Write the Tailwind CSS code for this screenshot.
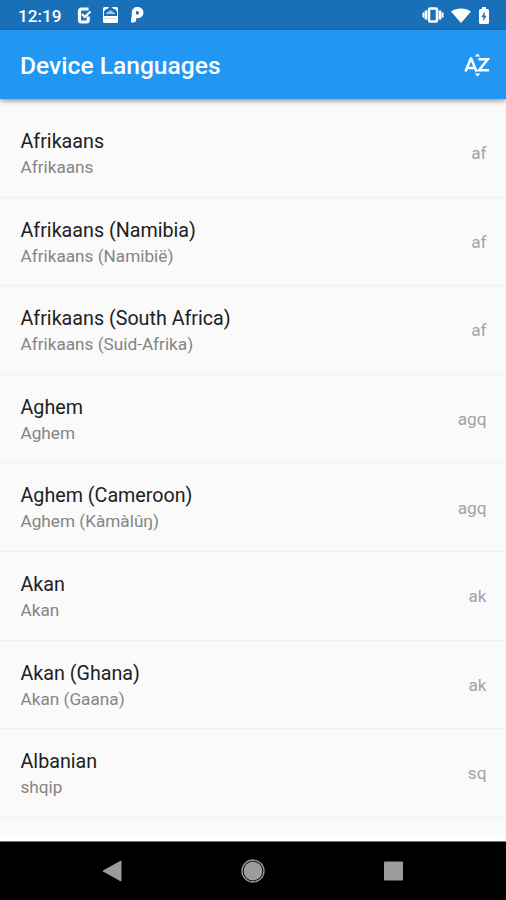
<!DOCTYPE html>
<html lang="en">
<head>
<meta charset="utf-8">
<title>Device Languages</title>
<script src="https://cdn.jsdelivr.net/npm/@tailwindcss/browser@4"></script>
</head>
<body class="w-[506px] h-[900px] overflow-hidden bg-[#fafafa] font-[Roboto,sans-serif] flex flex-col">
<div class="h-[30px] shrink-0 bg-[#1a70b8] text-white flex items-center justify-between pl-[18px] pr-[16px]">
  <div class="flex items-center h-full">
    <span class="text-[17.2px] leading-[30px] font-medium w-[59px] whitespace-nowrap pt-[2px]">12:19</span>
    <svg class="w-[15px] h-[17px]" viewBox="0 0 15 17" fill="none"><path d="M11.200 9.500V13a2 2 0 0 1-2 2H4.500a2 2 0 0 1-2-2V4a2 2 0 0 1 2-2h7" stroke="#fff" stroke-width="3.200"/><path d="M5 7l2.800 3L13.500 4.500" stroke="#fff" stroke-width="2.200"/></svg>
    <svg class="w-[15px] h-[16px] ml-[11px]" viewBox="0 0 15 16"><rect width="15" height="16" rx="1.500" fill="#fff"/><path d="M1 9V4.500L3 2h1.500a3.200 3.200 0 0 1 6 0H12l2 2.500V9z" fill="#1a70b8"/><path d="M3 7a1.800 1.800 0 0 1 2-1.800 2.700 2.700 0 0 1 5 0A1.800 1.800 0 0 1 12 7z" fill="#a9cbe8"/><path d="M1 11.500h13" stroke="#cfdfee" stroke-width="1"/></svg>
    <svg class="w-[13px] h-[16px] ml-[13px]" viewBox="0 0 13 16"><path fill-rule="evenodd" fill="#fff" d="M.8 5.800C.8 2 3.300 0 6.500 0 10.300 0 12.500 2.500 12.500 5.600S10.200 11.200 6.500 11.200H5.200v1.300c0 2-1 3-2.700 3H0V12c.8-1 .8-3.500.8-6.200zM5 4.200v3.200h1.500a1.600 1.600 0 0 0 0-3.200z"/></svg>
  </div>
  <div class="flex items-center">
    <svg class="w-[22px] h-[16px]" viewBox="0 0 22 16" fill="none" stroke="#fff"><rect x="7" y="1.500" width="8" height="13" rx="1" stroke-width="2.500"/><path d="M4 3.500v9M18 3.500v9" stroke-width="2.600"/><path d="M1.500 5.500v5M20.500 5.500v5" stroke-width="2"/></svg>
    <svg class="w-[20px] h-[15px] ml-[7px]" viewBox="0 0 20 15"><path d="M0 3.500C5.500-.6 14.500-.6 20 3.500L10 15z" fill="#fff"/></svg>
    <svg class="w-[10px] h-[17px] ml-[8px] mr-px" viewBox="0 0 10 17"><path d="M3 0h4v2h1.500A1.500 1.500 0 0 1 10 3.500v12A1.500 1.500 0 0 1 8.500 17h-7A1.500 1.500 0 0 1 0 15.500v-12A1.500 1.500 0 0 1 1.500 2H3z" fill="#fff"/><path d="M6 4.500L2.300 10h2.200L4 14.300 7.700 8.800H5.500z" fill="#1a70b8"/></svg>
  </div>
</div>
<header class="relative z-10 h-[69px] shrink-0 bg-[#2196f3] text-white flex items-center justify-between pl-[20px] pr-[16px] shadow-[0_2px_5px_rgba(0,0,0,0.4)]">
  <h1 class="text-[24.6px] leading-[30px] font-medium whitespace-nowrap pt-[3px]">Device Languages</h1>
  <svg class="w-[26px] h-[24px]" viewBox="0 0 26 24" fill="none" stroke="#fff" stroke-width="2.500"><path d="M1.500 18.500L6.800 5.500h.4l5.300 13M3.500 15h7"/><path d="M14.500 6.200h9.300L15 17.300h10"/><path d="M10.700 3.500L13.500.5l2.800 3zM10.700 20.500l2.800 3 2.800-3z" fill="#fff" stroke="none"/></svg>
</header>
<main id="list" class="flex-1 overflow-hidden pt-[10px]"></main>
<div class="h-[6px] shrink-0 bg-white border-b border-[#777]"></div>
<nav class="h-[58px] shrink-0 bg-black flex items-center justify-between pl-[102px] pr-[102px]">
  <svg class="w-[20px] h-[22px]" viewBox="0 0 20 22"><path d="M1 11L19 1v20z" fill="#9c9c9c" stroke="#9c9c9c" stroke-linejoin="round"/></svg>
  <svg class="w-[24px] h-[24px]" viewBox="0 0 24 24"><circle cx="12" cy="12" r="11" fill="none" stroke="#999" stroke-width="1.300"/><circle cx="12" cy="12" r="9.400" fill="#9c9c9c"/></svg>
  <svg class="w-[20px] h-[20px]" viewBox="0 0 20 20"><rect x="0" y=".5" width="19" height="19" rx="1" fill="#9c9c9c"/></svg>
</nav>
<script>
const rows = [
  ["Afrikaans", "Afrikaans", "af"],
  ["Afrikaans (Namibia)", "Afrikaans (Namibië)", "af"],
  ["Afrikaans (South Africa)", "Afrikaans (Suid-Afrika)", "af"],
  ["Aghem", "Aghem", "agq"],
  ["Aghem (Cameroon)", "Aghem (Kàmàlûŋ)", "agq"],
  ["Akan", "Akan", "ak"],
  ["Akan (Ghana)", "Akan (Gaana)", "ak"],
  ["Albanian", "shqip", "sq"]
];
document.getElementById("list").innerHTML = rows.map(([name, native, code]) => `
  <div class="h-[88.6px] flex items-center justify-between pl-[20.5px] pr-[19.5px] border-b border-[#f0f0f0]">
    <div class="whitespace-nowrap pt-[3.4px]">
      <div class="text-[19.7px] leading-[26px] text-[#212121]">${name}</div>
      <div class="text-[17.2px] leading-[25px] text-[#858585]">${native}</div>
    </div>
    <div class="text-[17.2px] leading-[26px] text-[#a3a3a3] pt-px">${code}</div>
  </div>`).join("");
</script>
</body>
</html>
